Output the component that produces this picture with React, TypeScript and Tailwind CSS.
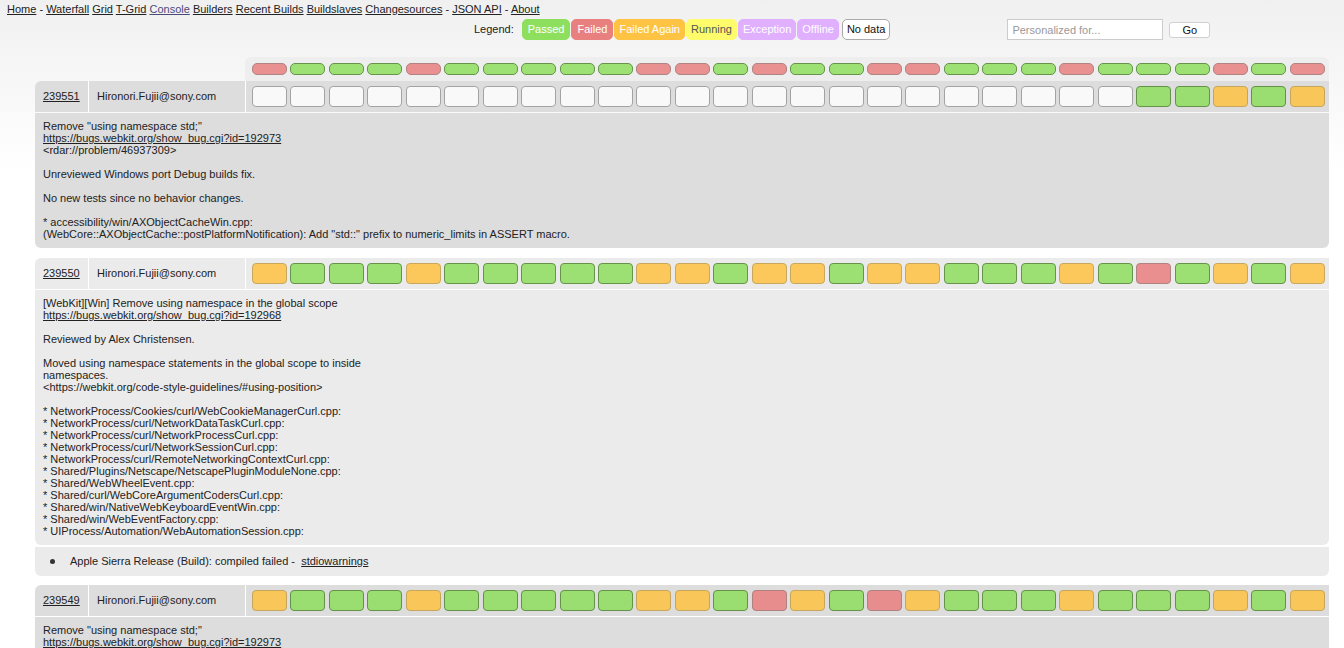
import React from "react";

const BOX: Record<string, string> = {
  g: "bg-[#8fdf5f] border-[#4f8530]",
  r: "bg-[#e98080] border-[#a77272]",
  o: "bg-[#ffc343] border-[#c29d46]",
  w: "bg-white border-[#999999]",
};

const HEADER = "rgggrgggggrrgrggrrgggrgggrgr";

type Row = {
  rev: string;
  who: string;
  status: string;
  alt: boolean;
  comment: React.ReactNode;
  failures?: React.ReactNode;
};

const L = ({ children }: { children: React.ReactNode }) => (
  <a href="#" className="underline text-[#222]">
    {children}
  </a>
);

const rows: Row[] = [
  {
    rev: "239551",
    who: "Hironori.Fujii@sony.com",
    status: "wwwwwwwwwwwwwwwwwwwwwww" + "ggogo",
    alt: false,
    comment: (
      <>
        {'Remove "using namespace std;"\n'}
        <L>https://bugs.webkit.org/show_bug.cgi?id=192973</L>
        {"\n<rdar://problem/46937309>\n\nUnreviewed Windows port Debug builds fix.\n\nNo new tests since no behavior changes.\n\n* accessibility/win/AXObjectCacheWin.cpp:\n(WebCore::AXObjectCache::postPlatformNotification): Add \"std::\" prefix to numeric_limits in ASSERT macro."}
      </>
    ),
  },
  {
    rev: "239550",
    who: "Hironori.Fujii@sony.com",
    status: "ogggogggggoogoogoogggogrgogo",
    alt: true,
    comment: (
      <>
        {"[WebKit][Win] Remove using namespace in the global scope\n"}
        <L>https://bugs.webkit.org/show_bug.cgi?id=192968</L>
        {"\n\nReviewed by Alex Christensen.\n\nMoved using namespace statements in the global scope to inside\nnamespaces.\n<https://webkit.org/code-style-guidelines/#using-position>\n\n* NetworkProcess/Cookies/curl/WebCookieManagerCurl.cpp:\n* NetworkProcess/curl/NetworkDataTaskCurl.cpp:\n* NetworkProcess/curl/NetworkProcessCurl.cpp:\n* NetworkProcess/curl/NetworkSessionCurl.cpp:\n* NetworkProcess/curl/RemoteNetworkingContextCurl.cpp:\n* Shared/Plugins/Netscape/NetscapePluginModuleNone.cpp:\n* Shared/WebWheelEvent.cpp:\n* Shared/curl/WebCoreArgumentCodersCurl.cpp:\n* Shared/win/NativeWebKeyboardEventWin.cpp:\n* Shared/win/WebEventFactory.cpp:\n* UIProcess/Automation/WebAutomationSession.cpp:"}
      </>
    ),
    failures: (
      <>
        Apple Sierra Release (Build): compiled failed -{"\u00a0 "}
        <L>stdiowarnings</L>
      </>
    ),
  },
  {
    rev: "239549",
    who: "Hironori.Fujii@sony.com",
    status: "ogggogggggoogrogrogggogggogo",
    alt: false,
    comment: (
      <>
        {'Remove "using namespace std;"\n'}
        <L>https://bugs.webkit.org/show_bug.cgi?id=192973</L>
        {"\n<rdar://problem/46937309>\n\nUnreviewed Windows port Debug builds fix."}
      </>
    ),
  },
];

const Legend = ({ label, cls }: { label: string; cls: string }) => (
  <div
    className={`h-[21px] px-[4px] flex items-center border rounded-[5px] ${cls}`}
  >
    {label}
  </div>
);

export default function App() {
  return (
    <div
      className="min-h-screen text-[11px] text-[#333] bg-[linear-gradient(to_bottom,#f0f0f0_0px,#ffffff_170px)]"
      style={{ fontFamily: '"Liberation Sans", Arial, Helvetica, sans-serif' }}
    >
      <div className="h-[19px] pt-[3px] pl-[7px] leading-[13px] text-[#222]">
        <L>Home</L> - <L>Waterfall</L> <L>Grid</L> <L>T-Grid</L>{" "}
        <a href="#" className="underline text-[#4b4b7a]">
          Console
        </a>{" "}
        <L>Builders</L> <L>Recent Builds</L> <L>Buildslaves</L>{" "}
        <L>Changesources</L> - <L>JSON API</L> - <L>About</L>
      </div>

      <div className="flex items-center h-[21px]">
        <div className="ml-[474px] mr-[8px] text-[#222]">Legend:</div>
        <div className="flex gap-[1px]">
          <Legend label="Passed" cls="px-[5px] bg-[#8fdf5f] border-[#8fdf5f] text-white" />
          <Legend label="Failed" cls="px-[5px] bg-[#e98080] border-[#e98080] text-white" />
          <Legend label="Failed Again" cls="bg-[#ffc343] border-[#ffc343] text-white" />
          <Legend label="Running" cls="bg-[#fffc6c] border-[#fffc6c] text-[#555]" />
          <Legend label="Exception" cls="bg-[#e0b0ff] border-[#e0b0ff] text-white" />
          <Legend label="Offline" cls="px-[3px] bg-[#e0b0ff] border-[#e0b0ff] text-white" />
          <Legend label="No data" cls="ml-[2px] bg-white border-[#aaaaaa] text-[#111]" />
        </div>
        <input
          className="ml-[117px] w-[156px] h-[21px] border border-[#cccccc] bg-white px-[4px] text-[11px] text-[#333] placeholder:text-[#999] outline-none"
          placeholder="Personalized for..."
        />
        <button className="ml-[6px] w-[41px] h-[16px] bg-white border border-[#d0d0d0] rounded-[3px] text-[11px] text-[#111] leading-[14px]">
          Go
        </button>
      </div>

      <div className="ml-[35px] w-[1294px] mt-[17px]">
        <div className="flex">
          <div className="w-[210px]" />
          <div className="flex-1 h-[24px] bg-[#eeeeee] rounded-t-[6px] flex items-center pl-[7px] pr-[4px] gap-[3.4px]">
            {HEADER.split("").map((c, i) => (
              <div
                key={i}
                className={`flex-1 h-[12px] border rounded-[5px] opacity-85 ${BOX[c]}`}
              />
            ))}
          </div>
        </div>

        {rows.map((row, ri) => {
          const bg = row.alt ? "bg-[#ebebeb]" : "bg-[#dddddd]";
          return (
            <div key={ri} className={ri === 0 ? "" : ri === 1 ? "mt-[10px]" : "mt-[9px]"}>
              <div className={`flex h-[31px] rounded-tl-[6px] ${bg}`}>
                <div className="w-[54px] border-r border-white pl-[8px] flex items-center">
                  <a href="#" className="underline text-[#222]">
                    {row.rev}
                  </a>
                </div>
                <div className="w-[157px] border-r border-white pl-[8px] flex items-center text-[#222]">
                  {row.who}
                </div>
                <div className="flex-1 flex items-center pl-[6px] pr-[4px] gap-[3.4px]">
                  {row.status.split("").map((c, i) => (
                    <div
                      key={i}
                      className={`flex-1 h-[21px] border rounded-[4px] opacity-85 ${BOX[c]}`}
                    />
                  ))}
                </div>
              </div>
              <div
                className={`mt-[1px] px-[8px] pt-[7px] pb-[8px] whitespace-pre-line leading-[12px] text-[#222] rounded-b-[6px] ${bg}`}
              >
                {row.comment}
              </div>
              {row.failures && (
                <div
                  className={`mt-[2px] h-[29px] flex items-center rounded-b-[6px] text-[#222] ${bg}`}
                >
                  <div className="ml-[15px] w-[5px] h-[5px] rounded-full bg-[#333]" />
                  <div className="ml-[15px]">{row.failures}</div>
                </div>
              )}
            </div>
          );
        })}
      </div>
    </div>
  );
}
